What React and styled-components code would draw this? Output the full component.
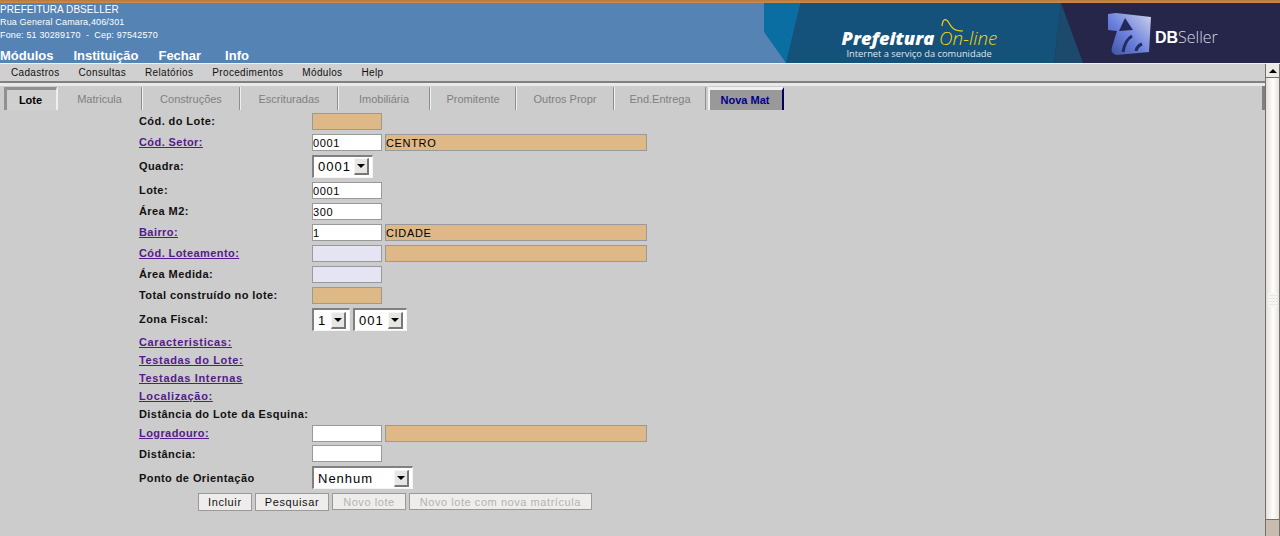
import React from "react";
import styled, { createGlobalStyle } from "styled-components";

const GlobalStyle = createGlobalStyle`
  html, body {
    margin: 0;
    padding: 0;
    height: 536px;
    overflow: hidden;
    background: #cccccc;
    font-family: "Liberation Sans", Arial, sans-serif;
  }
`;

const Page = styled.div`
  width: 1280px;
  height: 536px;
  display: flex;
  flex-direction: column;
  overflow: hidden;
`;

const TopStrip = styled.div`
  height: 3px;
  background: linear-gradient(#b5793f, #d08c48);
`;

const Header = styled.header`
  height: 60px;
  display: flex;
  justify-content: space-between;
  background: #5583b3;
  border-bottom: 1px solid #eef2f6;
`;

const Address = styled.div`
  display: flex;
  flex-direction: column;
  color: #fff;
`;

const AddressLine = styled.div`
  height: 13px;
  line-height: 13px;
  font-size: ${(p) => (p.$big ? "10px" : "9px")};
  letter-spacing: ${(p) => (p.$big ? "0.05px" : "0.15px")};
  white-space: pre;
`;

const TopMenu = styled.nav`
  display: flex;
  gap: 20px;
  margin-top: 7px;
  font-size: 13px;
  line-height: 14px;
  font-weight: bold;
  color: #fff;
`;

const InfoItem = styled.span`
  margin-left: 4px;
`;

const Banner = styled.svg`
  display: block;
  width: 516px;
  height: 60px;
`;

const Body = styled.div`
  flex: 1;
  display: flex;
  min-height: 0;
`;

const Main = styled.main`
  flex: 1;
  display: flex;
  flex-direction: column;
  min-width: 0;
`;

const MenuBar = styled.nav`
  height: 17px;
  display: flex;
  padding-left: 11px;
  gap: 19px;
  align-items: center;
  background: #d0d0d0;
  border-bottom: 2px solid #808080;
  font-size: 10px;
  letter-spacing: 0.33px;
  color: #111;
`;

const TabStrip = styled.div`
  position: relative;
  display: flex;
  height: 23px;
  padding-left: 4px;
  border-top: 3px solid #e9e9e9;

  &::after {
    content: "";
    position: absolute;
    right: 0;
    top: 0;
    width: 3px;
    height: 24px;
    background: #808080;
  }
`;

const Tab = styled.div`
  box-sizing: border-box;
  width: ${(p) => p.$w}px;
  height: 23px;
  margin-top: 1px;
  display: flex;
  align-items: center;
  justify-content: center;
  font-size: 11px;
  color: #808080;
  border-right: 1px solid #8f8f8f;
  border-left: 1px solid #efefef;
`;

const ActiveTab = styled(Tab)`
  color: #000;
  font-weight: bold;
  border-top: 3px solid #909090;
  border-left: 3px solid #909090;
  border-right: 1px solid #efefef;
  padding-right: 2px;
  background: #d0d0d0;
`;

const NewTab = styled(Tab)`
  margin-left: 2px;
  color: #00008b;
  font-weight: bold;
  background: #999999;
  border-top: 3px solid #f0f0f0;
  border-left: 2px solid #f0f0f0;
  border-right: 2px solid #00005a;
  padding-right: 2px;
`;

const Form = styled.form`
  display: flex;
  flex-direction: column;
  padding-left: 139px;
  padding-top: 2px;
`;

const Row = styled.div`
  display: flex;
  align-items: center;
  height: ${(p) => p.$h}px;
`;

const Label = styled.div`
  width: 173px;
  flex: none;
  padding-bottom: ${(p) => (p.$up ? "2px" : "0")};
  font-size: 11px;
  font-weight: bold;
  letter-spacing: 0.42px;
  color: #111;
  white-space: nowrap;
`;

const LinkLabel = styled.a`
  color: #551a8b;
  text-decoration: underline;
  letter-spacing: ${(p) => (p.$wide ? "0.65px" : "0.42px")};
`;

const Field = styled.input`
  box-sizing: border-box;
  width: ${(p) => p.$w || 70}px;
  height: 17px;
  padding: 1px 0 0 0;
  margin: 0 ${(p) => (p.$gap ? "3px" : "0")} 0 0;
  border: 1px solid #999999;
  border-radius: 0;
  outline: none;
  background: ${(p) => p.$bg || "#ffffff"};
  font-family: "Liberation Sans", Arial, sans-serif;
  font-size: 11px;
  letter-spacing: 0.65px;
  color: #000;
`;

const Select = styled.div`
  box-sizing: border-box;
  width: ${(p) => p.$w}px;
  height: 23px;
  margin-right: 3px;
  display: flex;
  align-items: center;
  justify-content: space-between;
  padding-left: 4px;
  padding-right: 3px;
  background: #fff;
  border-top: 2px solid #808080;
  border-left: 2px solid #808080;
  border-right: 1px solid #f4f4f4;
  border-bottom: 1px solid #f4f4f4;
  font-size: 13px;
  letter-spacing: 1px;
  color: #000;
`;

const SelectArrow = styled.span`
  box-sizing: border-box;
  width: 15px;
  height: 17px;
  display: flex;
  align-items: center;
  justify-content: center;
  background: #e8e6e2;
  border-top: 1px solid #f6f6f6;
  border-left: 1px solid #f6f6f6;
  border-right: 2px solid #777;
  border-bottom: 2px solid #777;

  &::after {
    content: "";
    border-left: 4px solid transparent;
    border-right: 4px solid transparent;
    border-top: 4px solid #000;
  }
`;

const Buttons = styled.div`
  display: flex;
  align-items: flex-start;
  gap: 3px;
  padding-left: 59px;
  height: 18px;
  margin-top: 2px;
`;

const Button = styled.button`
  box-sizing: border-box;
  height: ${(p) => (p.disabled ? "17px" : "18px")};
  padding: 0 ${(p) => (p.disabled ? "10px" : "9px")};
  background: #efedeb;
  border: 1px solid #9a9a9a;
  border-radius: 0;
  font-family: "Liberation Sans", Arial, sans-serif;
  font-size: 11px;
  letter-spacing: ${(p) => (p.disabled ? "0.56px" : "0.62px")};
  color: ${(p) => (p.disabled ? "#b4b2b0" : "#111")};
`;

const Scrollbar = styled.aside`
  flex: none;
  width: 15px;
  box-sizing: border-box;
  display: flex;
  flex-direction: column;
  border-left: 1px solid #77706a;
  border-right: 1px solid #77706a;
  background: #c8bcb0;
`;

const ScrollUp = styled.div`
  height: 13px;
  display: flex;
  align-items: center;
  justify-content: center;
  background: #eceae6;
  border-bottom: 1px solid #77706a;

  &::after {
    content: "";
    border-left: 4px solid transparent;
    border-right: 4px solid transparent;
    border-bottom: 4px solid #000;
  }
`;

const ScrollThumb = styled.div`
  height: 441px;
  display: flex;
  align-items: center;
  justify-content: center;
  background: linear-gradient(90deg, #e4dfda, #ffffff 55%, #e6e2de);
  border-bottom: 1px solid #77706a;
`;

const Grip = styled.div`
  width: 9px;
  height: 14px;
  margin-top: 2px;
  background: repeating-linear-gradient(90deg, #f4f2f0 0 2px, transparent 2px 3px),
    repeating-linear-gradient(0deg, #ffffff 0 2px, #d8d4d0 2px 3px);
`;

const LogoBanner = () => (
  <Banner viewBox="0 0 516 60">
    <defs>
      <linearGradient id="cube" x1="0" y1="1" x2="1" y2="0">
        <stop offset="0" stopColor="#3f4f9e" />
        <stop offset="0.45" stopColor="#6a80dc" />
        <stop offset="0.8" stopColor="#a9b4e6" />
        <stop offset="1" stopColor="#d4d8ee" />
      </linearGradient>
    </defs>
    <rect width="516" height="60" fill="#5583b3" />
    <polygon points="0,0 36,0 23,60 22,60 0,29" fill="#0b6ea3" />
    <polygon points="36,0 297,0 297,60 22,60" fill="#14527c" />
    <polygon points="297,0 516,0 516,60 290,60" fill="#26264a" />
    <polygon points="297,0 319,60 290,60" fill="#1b4a6c" />
    <text x="77.5" y="42" fontFamily="'Open Sans', sans-serif" fontStyle="italic" fontWeight="800" fontSize="18.3" fill="#fff">Prefeitura</text>
    <text x="175" y="42" fontFamily="'Open Sans', sans-serif" fontStyle="italic" fontWeight="300" fontSize="18.8" fill="#f2d40e">On-line</text>
    <path d="M178 23 C179 15 182 15 185 20 C188 26 191 28 199 28" fill="none" stroke="#f2d40e" strokeWidth="1.2" />
    <text x="82.5" y="54" fontFamily="'Open Sans', sans-serif" fontSize="9.3" fill="#dfe8ee">Internet a serviço da comunidade</text>
    <path d="M344 11 L352 10 L387 14 L385 49 L352 52 Q346 50 348 44 L353 28 L344 27 Z" fill="url(#cube)" />
    <polygon points="361,15 369,27 355,28" fill="#27285a" />
    <path d="M359 49 Q361 37 368 33 M372 48 Q373 43 378 41" fill="none" stroke="#252a60" strokeWidth="3" />
    <text x="391" y="40" fontFamily="'Liberation Sans', sans-serif" fontWeight="bold" fontSize="16" fill="#fff">DB</text>
    <text x="414" y="40" fontFamily="'Open Sans', sans-serif" fontWeight="300" fontSize="16" fill="#d8d8e4">Seller</text>
  </Banner>
);

const App = () => {
  const tan = "#deb887";
  const lilac = "#e4e4f2";
  return (
    <Page>
      <GlobalStyle />
      <TopStrip />
      <Header>
        <div>
          <Address>
            <AddressLine $big>PREFEITURA DBSELLER</AddressLine>
            <AddressLine>Rua General Camara,406/301</AddressLine>
            <AddressLine>{"Fone: 51 30289170  -  Cep: 97542570"}</AddressLine>
          </Address>
          <TopMenu>
            <span>Módulos</span>
            <span>Instituição</span>
            <span>Fechar</span>
            <InfoItem>Info</InfoItem>
          </TopMenu>
        </div>
        <LogoBanner />
      </Header>
      <Body>
        <Main>
          <MenuBar>
            <span>Cadastros</span>
            <span>Consultas</span>
            <span>Relatórios</span>
            <span>Procedimentos</span>
            <span>Módulos</span>
            <span>Help</span>
          </MenuBar>
          <TabStrip>
            <ActiveTab $w={53}>Lote</ActiveTab>
            <Tab $w={85}>Matricula</Tab>
            <Tab $w={98}>Construções</Tab>
            <Tab $w={98}>Escrituradas</Tab>
            <Tab $w={92}>Imobiliária</Tab>
            <Tab $w={86}>Promitente</Tab>
            <Tab $w={98}>Outros Propr</Tab>
            <Tab $w={92}>End.Entrega</Tab>
            <NewTab $w={76}>Nova Mat</NewTab>
          </TabStrip>
          <Form>
            <Row $h={20}>
              <Label>Cód. do Lote:</Label>
              <Field readOnly $bg={tan} />
            </Row>
            <Row $h={22}>
              <Label><LinkLabel>Cód. Setor:</LinkLabel></Label>
              <Field readOnly value="0001" $gap />
              <Field readOnly value="CENTRO" $w={262} $bg={tan} />
            </Row>
            <Row $h={26}>
              <Label>Quadra:</Label>
              <Select $w={61}>0001<SelectArrow /></Select>
            </Row>
            <Row $h={22}>
              <Label>Lote:</Label>
              <Field readOnly value="0001" />
            </Row>
            <Row $h={21}>
              <Label $up>Área M2:</Label>
              <Field readOnly value="300" />
            </Row>
            <Row $h={21}>
              <Label $up><LinkLabel>Bairro:</LinkLabel></Label>
              <Field readOnly value="1" $gap />
              <Field readOnly value="CIDADE" $w={262} $bg={tan} />
            </Row>
            <Row $h={21}>
              <Label $up><LinkLabel>Cód. Loteamento:</LinkLabel></Label>
              <Field readOnly $bg={lilac} $gap />
              <Field readOnly $w={262} $bg={tan} />
            </Row>
            <Row $h={21}>
              <Label $up>Área Medida:</Label>
              <Field readOnly $bg={lilac} />
            </Row>
            <Row $h={21}>
              <Label $up>Total construído no lote:</Label>
              <Field readOnly $bg={tan} />
            </Row>
            <Row $h={27}>
              <Label $up>Zona Fiscal:</Label>
              <Select $w={38}>1<SelectArrow /></Select>
              <Select $w={54}>001<SelectArrow /></Select>
            </Row>
            <Row $h={18}>
              <Label><LinkLabel $wide>Caracteristicas:</LinkLabel></Label>
            </Row>
            <Row $h={18}>
              <Label><LinkLabel $wide>Testadas do Lote:</LinkLabel></Label>
            </Row>
            <Row $h={18}>
              <Label><LinkLabel $wide>Testadas Internas</LinkLabel></Label>
            </Row>
            <Row $h={18}>
              <Label><LinkLabel $wide>Localização:</LinkLabel></Label>
            </Row>
            <Row $h={18}>
              <Label>Distância do Lote da Esquina:</Label>
            </Row>
            <Row $h={20}>
              <Label><LinkLabel>Logradouro:</LinkLabel></Label>
              <Field readOnly $gap />
              <Field readOnly $w={262} $bg={tan} />
            </Row>
            <Row $h={21}>
              <Label>Distância:</Label>
              <Field readOnly />
            </Row>
            <Row $h={27}>
              <Label>Ponto de Orientação</Label>
              <Select $w={101}>Nenhum<SelectArrow /></Select>
            </Row>
            <Buttons>
              <Button type="button">Incluir</Button>
              <Button type="button">Pesquisar</Button>
              <Button type="button" disabled>Novo lote</Button>
              <Button type="button" disabled>Novo lote com nova matrícula</Button>
            </Buttons>
          </Form>
        </Main>
        <Scrollbar>
          <ScrollUp />
          <ScrollThumb><Grip /></ScrollThumb>
        </Scrollbar>
      </Body>
    </Page>
  );
};

export default App;
